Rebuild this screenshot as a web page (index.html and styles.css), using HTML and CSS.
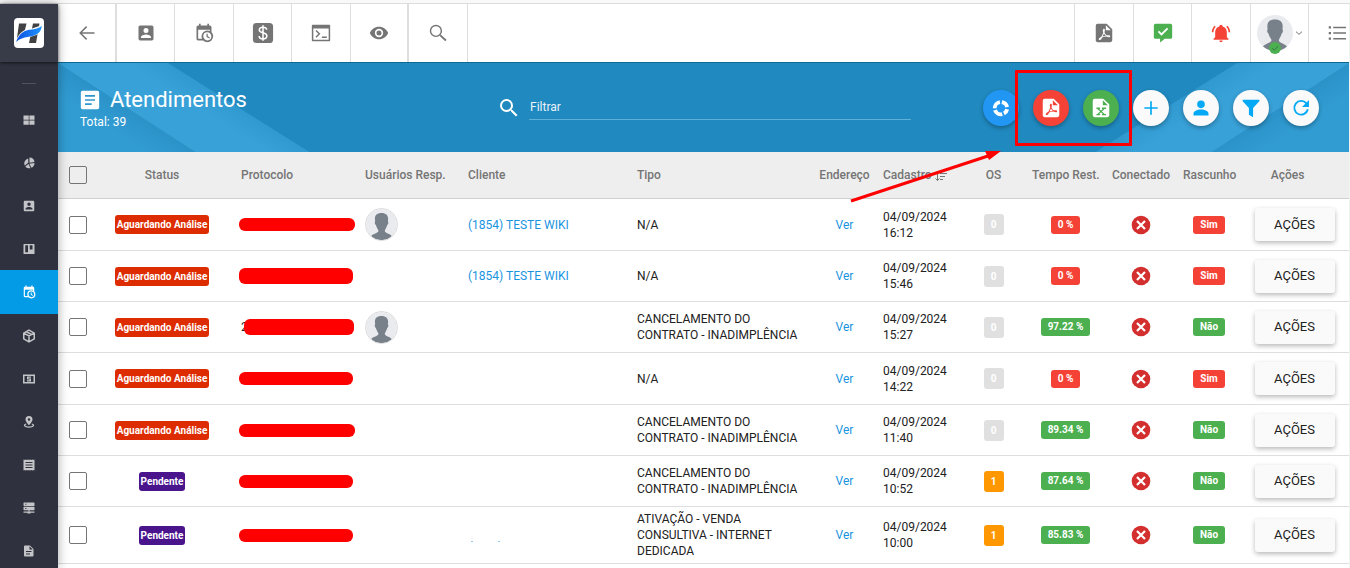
FILE: index.html
```html
<!DOCTYPE html>
<html lang="pt-BR">
<head>
<meta charset="utf-8">
<meta name="viewport" content="width=device-width, initial-scale=1">
<title>Atendimentos</title>
<link rel="stylesheet" href="styles.css">
</head>
<body>
<svg class="sprite" aria-hidden="true">
  <symbol id="i-back" viewBox="0 0 24 24"><path d="M22 12H3M11.500 3.500 3 12l8.500 8.500" fill="none" stroke="currentColor" stroke-width="2"/></symbol>
  <symbol id="i-account" viewBox="0 0 24 24"><path fill="currentColor" d="M6,17C6,15 10,13.900 12,13.900C14,13.900 18,15 18,17V18H6M15,9A3,3 0 0,1 12,12A3,3 0 0,1 9,9A3,3 0 0,1 12,6A3,3 0 0,1 15,9M3,5V19A2,2 0 0,0 5,21H19A2,2 0 0,0 21,19V5A2,2 0 0,0 19,3H5C3.890,3 3,3.900 3,5Z"/></symbol>
  <symbol id="i-calendar" viewBox="0 0 24 24"><path fill="currentColor" d="M15,13H16.500V15.820L18.940,17.230L18.190,18.530L15,16.690V13M19,8H5V19H9.670C9.240,18.090 9,17.070 9,16A7,7 0 0,1 16,9C17.070,9 18.090,9.240 19,9.670V8M5,21C3.890,21 3,20.100 3,19V5C3,3.890 3.890,3 5,3H6V1H8V3H16V1H18V3H19A2,2 0 0,1 21,5V11.100C22.240,12.360 23,14.090 23,16A7,7 0 0,1 16,23C14.090,23 12.360,22.240 11.100,21H5M16,11.150A4.850,4.850 0 0,0 11.150,16C11.150,18.680 13.320,20.850 16,20.850A4.850,4.850 0 0,0 20.850,16C20.850,13.320 18.680,11.150 16,11.150Z"/></symbol>
  <symbol id="i-dollar" viewBox="0 0 24 24"><rect x="1" y="1" width="22" height="22" rx="4" fill="currentColor"/><path d="M16 8.500C16 6.500 14 5.700 12 5.700S8 6.700 8 8.700c0 4 8.200 2.300 8.200 6.500 0 2.200-2.200 3.100-4.200 3.100S7.800 17.300 7.800 15.200M12 3.500v17" fill="none" stroke="#fff" stroke-width="1.700"/></symbol>
  <symbol id="i-console" viewBox="0 0 24 24"><path fill="currentColor" fill-rule="evenodd" d="M2 2h20a1 1 0 0 1 1 1v18a1 1 0 0 1-1 1H2a1 1 0 0 1-1-1V3a1 1 0 0 1 1-1M2.800 6.500v13.700h18.400V6.500Z"/><path d="m6 9 4 4-4 4M13 17h6" fill="none" stroke="currentColor" stroke-width="1.800"/></symbol>
  <symbol id="i-eye" viewBox="0 0 24 24"><path fill="currentColor" d="M12,9A3,3 0 0,0 9,12A3,3 0 0,0 12,15A3,3 0 0,0 15,12A3,3 0 0,0 12,9M12,17A5,5 0 0,1 7,12A5,5 0 0,1 12,7A5,5 0 0,1 17,12A5,5 0 0,1 12,17M12,4.500C7,4.500 2.730,7.610 1,12C2.730,16.390 7,19.500 12,19.500C17,19.500 21.270,16.390 23,12C21.270,7.610 17,4.500 12,4.500Z"/></symbol>
  <symbol id="i-search" viewBox="0 0 24 24"><path fill="currentColor" d="M9.500,3A6.500,6.500 0 0,1 16,9.500C16,11.110 15.410,12.590 14.440,13.730L14.710,14H15.500L20.500,19L19,20.500L14,15.500V14.710L13.730,14.440C12.590,15.410 11.110,16 9.500,16A6.500,6.500 0 0,1 3,9.500A6.500,6.500 0 0,1 9.500,3M9.500,5C7,5 5,7 5,9.500C5,12 7,14 9.500,14C12,14 14,12 14,9.500C14,7 12,5 9.500,5Z"/></symbol>
  <symbol id="i-search-thin" viewBox="0 0 24 24"><circle cx="9.500" cy="9.500" r="6.500" fill="none" stroke="currentColor" stroke-width="1.700"/><path d="m14.500 14.500 7 6.500" stroke="currentColor" stroke-width="2.200"/></symbol>
  <symbol id="i-pdf" viewBox="0 0 24 24"><path fill="currentColor" d="M14,9H19.500L14,3.500V9M7,2H15L21,8V20A2,2 0 0,1 19,22H5C3.890,22 3,21.100 3,20V4A2,2 0 0,1 5,2M11.930,12.440C12.340,13.340 12.860,14.080 13.460,14.590L13.870,14.910C13,15.070 11.800,15.350 10.530,15.840L10.420,15.880L10.920,14.840C11.370,13.970 11.700,13.180 11.930,12.440M18.410,16.250C18.590,16.070 18.680,15.840 18.690,15.590C18.720,15.390 18.670,15.200 18.570,15.040C18.280,14.570 17.530,14.350 16.290,14.350L15,14.420L14.130,13.840C13.500,13.320 12.930,12.410 12.530,11.280L12.570,11.140C12.900,9.810 13.210,8.200 12.550,7.540C12.390,7.380 12.170,7.300 11.940,7.300H11.700C11.330,7.300 11,7.690 10.910,8.070C10.540,9.400 10.760,10.130 11.130,11.340C10.880,12.230 10.560,13.250 10.050,14.280L9.090,16.080L8.200,16.570C7,17.320 6.430,18.160 6.320,18.690C6.280,18.880 6.300,19.050 6.370,19.230L6.400,19.280L6.880,19.590L7.320,19.700C8.130,19.700 9.050,18.750 10.290,16.630L10.470,16.560C11.500,16.230 12.780,16 14.500,15.810C15.530,16.320 16.740,16.550 17.500,16.550C17.940,16.550 18.240,16.440 18.410,16.250Z"/></symbol>
  <symbol id="i-excel" viewBox="0 0 24 24"><path fill="currentColor" fill-rule="evenodd" d="M5 2H14.500L21 8V20A2 2 0 0 1 19 22H5A2 2 0 0 1 3 20V4A2 2 0 0 1 5 2M14 3.500V9H19.500ZM7 11.500V13H8L11 15.800 8 18.500H7V20H11V18.500H10L12 16.700 14 18.500H13V20H17.500V18.500H16L13 15.800 16 13H17.500V11.500H13V13H14L12 14.800 10 13H11V11.500Z"/></symbol>
  <symbol id="i-msg" viewBox="0 0 24 24"><path fill="currentColor" d="M3 1H21A2 2 0 0 1 23 3V17A2 2 0 0 1 21 19H14L8.500 23.500V19H3A2 2 0 0 1 1 17V3A2 2 0 0 1 3 1Z"/><path d="m6.500 10 3.700 3.700L17.500 6.500" fill="none" stroke="#fff" stroke-width="2.200"/></symbol>
  <symbol id="i-bell" viewBox="0 0 24 24"><path fill="currentColor" d="M21,19V20H3V19L5,17V11C5,7.900 7.030,5.170 10,4.290C10,4.190 10,4.100 10,4A2,2 0 0,1 12,2A2,2 0 0,1 14,4C14,4.100 14,4.190 14,4.290C16.970,5.170 19,7.900 19,11V17L21,19M14,21A2,2 0 0,1 12,23A2,2 0 0,1 10,21M19.750,3.190L18.330,4.610C20.040,6.300 21,8.600 21,11H23C23,8.070 21.840,5.250 19.750,3.190M1,11H3C3,8.600 3.960,6.300 5.670,4.610L4.250,3.190C2.160,5.250 1,8.070 1,11Z"/></symbol>
  <symbol id="i-list" viewBox="0 0 24 24"><path fill="currentColor" d="M1 3h3v3H1zM1 10.500h3v3H1zM1 18h3v3H1zM7 3.500h17v2H7zM7 11h17v2H7zM7 18.500h17v2H7z"/></symbol>
  <symbol id="i-avatar" viewBox="0 0 36 36"><circle cx="18" cy="18" r="18" fill="#e9ebef"/><path fill="#78808a" d="M6 31.500C8 28.500 14 28 14.500 25.500 14.500 24 12 21.500 11.500 18.500 9.800 17.500 10 14.500 10.700 14.200 9.300 8 12 4.500 18 4.500S26.600 8 25.400 14.200C26.200 14.500 26.200 17.500 24.700 18.500 24 21.500 21.800 24 21.800 25.500 22 28 28 28.500 30 31.500A18 18 0 0 1 6 31.500Z"/></symbol>
  <symbol id="i-down" viewBox="0 0 12 12"><path d="m1.500 4 4.500 4 4.500-4" fill="none" stroke="currentColor" stroke-width="1.500"/></symbol>
  <symbol id="i-grid" viewBox="0 0 24 24"><path fill="currentColor" d="M1 3h10.500v8.500H1zM12.800 3H23v8.500H12.800zM1 12.800h10.500v8.500H1zM12.800 12.800H23v8.500H12.800z"/></symbol>
  <symbol id="i-pie" viewBox="0 0 24 24"><path fill="currentColor" d="M10.500 3v8.500L3.500 17A10 10 0 0 1 10.500 3M13 1a10.500 10.500 0 0 1 10 9l-10 1.500zM12.500 13.500 23 12a10.500 10.500 0 0 1-6 9.500zM11 13.800l4 8.500a10.500 10.500 0 0 1-10.500-3.500z"/></symbol>
  <symbol id="i-board" viewBox="0 0 24 24"><path fill="currentColor" fill-rule="evenodd" d="M2 2h20a1 1 0 0 1 1 1v18a1 1 0 0 1-1 1H2a1 1 0 0 1-1-1V3a1 1 0 0 1 1-1M4.500 4.500v14H10v-14ZM13.500 4.500v8.500H19V4.500Z"/></symbol>
  <symbol id="i-cube" viewBox="0 0 24 24"><path d="m12 2 9 5v10l-9 5-9-5V7ZM3 7l9 5 9-5M12 12v10M7 4.500l9.500 5" fill="none" stroke="currentColor" stroke-width="2.600"/></symbol>
  <symbol id="i-cash" viewBox="0 0 24 24"><path fill="currentColor" fill-rule="evenodd" d="M0 3h24v18H0zM3 6v12h18V6Z"/><path fill="currentColor" d="M8 7h8v2.500h-5V11h5v6H8v-2.500h5V13H8z"/></symbol>
  <symbol id="i-pin" viewBox="0 0 24 24"><path fill="currentColor" fill-rule="evenodd" d="M12 0a7 7 0 0 1 7 7c0 4.500-7 11.500-7 11.500S5 11.500 5 7a7 7 0 0 1 7-7m0 4.500a2.500 2.500 0 1 0 0 5 2.500 2.500 0 0 0 0-5"/><path d="M6.500 16C0 18 3 22.300 12 22.300S24 18 17.500 16" fill="none" stroke="currentColor" stroke-width="2.600"/></symbol>
  <symbol id="i-receipt" viewBox="0 0 24 24"><path fill="currentColor" fill-rule="evenodd" d="m1 1 2 1.200L5 1l2.500 1.200L10 1l2 1.200L14 1l2.500 1.200L19 1l2 1.200L23 1v22l-2-1.200L19 23l-2.500-1.200L14 23l-2-1.200L10 23l-2.500-1.200L5 23l-2-1.200L1 23ZM5 6v2h14V6ZM5 11v2h14v-2ZM5 16v2h14v-2Z"/></symbol>
  <symbol id="i-server" viewBox="0 0 24 24"><path fill="currentColor" d="M2 1h20l1 1v5l-1 1H2L1 7V2zM2 9.500h20l1 1v5l-1 1h-9V19h10v2.500h-8V23H9v-1.500H1V19h10v-2.500H2l-1-1v-5z"/><path d="M4 4.500h3M4 13h3" stroke="#2f323e" stroke-width="1.500"/></symbol>
  <symbol id="i-doc" viewBox="0 0 24 24"><path fill="currentColor" fill-rule="evenodd" d="M4 1h10l7 7v13a2 2 0 0 1-2 2H4a2 2 0 0 1-2-2V3a2 2 0 0 1 2-2M13 2.500V9h6.500ZM6 12v2h11v-2ZM6 17v2h8v-2Z"/></symbol>
  <symbol id="i-article" viewBox="0 0 24 24"><path fill="currentColor" fill-rule="evenodd" d="M3 1h18a2 2 0 0 1 2 2v18a2 2 0 0 1-2 2H3a2 2 0 0 1-2-2V3a2 2 0 0 1 2-2M6 6v2h12V6ZM6 11v2h12v-2ZM6 16v2h8v-2Z"/></symbol>
  <symbol id="i-donut" viewBox="0 0 24 24"><path d="M13 5A7.500 7.500 0 0 1 19.300 11M19.400 13.500A7.500 7.500 0 0 1 15.500 18.600M13.500 19.300A7.500 7.500 0 0 1 4.700 14.500M4.400 12.300A7.500 7.500 0 0 1 10.700 5" fill="none" stroke="currentColor" stroke-width="4.600"/></symbol>
  <symbol id="i-plus" viewBox="0 0 24 24"><path d="M12 4v16M4 12h16" stroke="currentColor" stroke-width="2"/></symbol>
  <symbol id="i-user" viewBox="0 0 24 24"><path fill="currentColor" d="M12 3a4.600 4.600 0 1 1 0 9.200A4.600 4.600 0 0 1 12 3M12 13.800c5 0 9 2 9 5V21H3v-2.200c0-3 4-5 9-5"/></symbol>
  <symbol id="i-filter" viewBox="0 0 24 24"><path fill="currentColor" d="M2 2H22V4L14.500 12V23L9.500 20V12L2 4Z"/></symbol>
  <symbol id="i-refresh" viewBox="0 0 24 24"><path d="M18.500 6.500A8.200 8.200 0 1 0 20.200 13.500" fill="none" stroke="currentColor" stroke-width="2.200"/><path fill="currentColor" d="M21.500 2.500v8.300h-8.300z"/></symbol>
  <symbol id="i-close" viewBox="0 0 20 20"><circle cx="10" cy="10" r="9.300" fill="#d32f2f"/><path d="m6 6 8 8M14 6l-8 8" stroke="#fff" stroke-width="2.200"/></symbol>
  <symbol id="i-sort" viewBox="0 0 12 10"><path d="M2.500 0v8.500M.5 6.500l2 2 2-2M5 1.500h7M5 4.500h5M5 7.500h3" fill="none" stroke="currentColor"/></symbol>
</svg>

<div class="strip"></div>
<div class="app">
  <aside class="sidebar">
    <a class="logo" href="#" aria-label="Início">
      <svg viewBox="0 0 30 30"><defs><linearGradient id="wing" x1="0" x2="1"><stop offset="0" stop-color="#0b4fe0"/><stop offset="1" stop-color="#1e96ff"/></linearGradient></defs><rect width="30" height="30" rx="4" fill="#fff"/><path fill="#414143" d="M5 5.500h7.500L9 20H3zM19 5.500h6.500L22 25h-7z"/><path fill="#fff" d="M2 22.500C6 13 11 11 18 10.500l10.500-3.500-3 8c-7 5.500-14 2-23.500 10"/><path fill="url(#wing)" d="M2 24C6 14 11 12 18 11.500c4-.5 7-1.500 10-3.500-1 3-1 5-4 7.500-7 5-14 1.500-22 8.500"/></svg>
    </a>
    <div class="rule"></div>
    <nav class="menu">
      <a href="#" aria-label="Painel"><svg><use href="#i-grid"/></svg></a>
      <a href="#" aria-label="Gráficos"><svg><use href="#i-pie"/></svg></a>
      <a href="#" aria-label="Clientes"><svg class="md"><use href="#i-account"/></svg></a>
      <a href="#" aria-label="Quadros"><svg><use href="#i-board"/></svg></a>
      <a class="active" href="#" aria-label="Atendimentos"><svg class="md"><use href="#i-calendar"/></svg></a>
      <a href="#" aria-label="Estoque"><svg class="md"><use href="#i-cube"/></svg></a>
      <a href="#" aria-label="Financeiro"><svg><use href="#i-cash"/></svg></a>
      <a href="#" aria-label="Mapa"><svg><use href="#i-pin"/></svg></a>
      <a href="#" aria-label="Notas"><svg><use href="#i-receipt"/></svg></a>
      <a href="#" aria-label="Servidores"><svg><use href="#i-server"/></svg></a>
      <a href="#" aria-label="Relatórios"><svg><use href="#i-doc"/></svg></a>
    </nav>
  </aside>

  <main class="main">
    <header class="topbar">
      <div class="tools">
        <button class="group-end" aria-label="Voltar"><svg><use href="#i-back"/></svg></button>
        <button aria-label="Clientes"><svg class="lg"><use href="#i-account"/></svg></button>
        <button aria-label="Agenda"><svg class="lg"><use href="#i-calendar"/></svg></button>
        <button aria-label="Financeiro"><svg class="xl"><use href="#i-dollar"/></svg></button>
        <button aria-label="Console"><svg class="lg"><use href="#i-console"/></svg></button>
        <button class="group-end" aria-label="Visualizar"><svg class="lg"><use href="#i-eye"/></svg></button>
        <button aria-label="Buscar"><svg class="lg"><use href="#i-search-thin"/></svg></button>
      </div>
      <div class="tools right">
        <button aria-label="PDF"><svg class="xl"><use href="#i-pdf"/></svg></button>
        <button class="green" aria-label="Mensagens"><svg class="lg"><use href="#i-msg"/></svg></button>
        <button class="red" aria-label="Alertas"><svg class="lg"><use href="#i-bell"/></svg></button>
        <button class="profile" aria-label="Perfil"><span class="face"><svg class="photo"><use href="#i-avatar"/></svg><svg class="online" viewBox="0 0 12 12"><circle cx="6" cy="6" r="6" fill="#4caf50"/><path d="m3 6 2.200 2.200L9 4" fill="none" stroke="#3a7d52"/></svg></span><svg class="chev"><use href="#i-down"/></svg></button>
        <button class="last" aria-label="Menu"><svg><use href="#i-list"/></svg></button>
      </div>
    </header>

    <section class="hero">
      <svg class="deco left" viewBox="0 0 260 90" aria-hidden="true"><defs><linearGradient id="shade" gradientUnits="userSpaceOnUse" x1="55" y1="67" x2="69" y2="45"><stop offset="0" stop-color="#319cd2"/><stop offset="1" stop-color="#2b92c8"/></linearGradient><linearGradient id="band" gradientUnits="userSpaceOnUse" x1="170" y1="64" x2="182" y2="45"><stop offset="0" stop-color="#38a1d8"/><stop offset="1" stop-color="#3099cf"/></linearGradient></defs><path d="M0 0H110L253 90H0Z" fill="url(#band)"/><path d="M0 0 139 90H0Z" fill="url(#shade)"/></svg>
      <svg class="deco right" viewBox="0 0 260 90" aria-hidden="true"><defs><linearGradient id="band2" gradientUnits="userSpaceOnUse" x1="77" y1="45" x2="89" y2="64"><stop offset="0" stop-color="#3099cf"/><stop offset="1" stop-color="#38a1d8"/></linearGradient><linearGradient id="shade2" gradientUnits="userSpaceOnUse" x1="190" y1="45" x2="204" y2="67"><stop offset="0" stop-color="#2b92c8"/><stop offset="1" stop-color="#319cd2"/></linearGradient></defs><path d="M5 90 148 0H260V90Z" fill="url(#band2)"/><path d="M121 90 260 0V90Z" fill="url(#shade2)"/></svg>
      <div class="heading">
        <h1><svg><use href="#i-article"/></svg>Atendimentos</h1>
        <p>Total: 39</p>
      </div>
      <div class="search">
        <svg><use href="#i-search"/></svg>
        <input type="text" placeholder="Filtrar" aria-label="Filtrar">
      </div>
      <div class="actions">
        <button class="fab blue" aria-label="Gráfico"><svg><use href="#i-donut"/></svg></button>
        <button class="fab danger" aria-label="Exportar PDF"><svg class="file"><use href="#i-pdf"/></svg></button>
        <button class="fab success" aria-label="Exportar Excel"><svg class="file"><use href="#i-excel"/></svg></button>
        <button class="fab" aria-label="Adicionar"><svg><use href="#i-plus"/></svg></button>
        <button class="fab" aria-label="Usuário"><svg><use href="#i-user"/></svg></button>
        <button class="fab" aria-label="Filtros"><svg><use href="#i-filter"/></svg></button>
        <button class="fab" aria-label="Atualizar"><svg><use href="#i-refresh"/></svg></button>
      </div>
    </section>

    <table class="grid">
      <colgroup><col class="c-check"><col class="c-status"><col class="c-proto"><col class="c-user"><col class="c-client"><col class="c-type"><col class="c-addr"><col class="c-date"><col class="c-os"><col class="c-time"><col class="c-conn"><col class="c-draft"><col class="c-act"></colgroup>
      <thead>
        <tr><th><input type="checkbox" aria-label="Selecionar todos"></th><th class="mid">Status</th><th>Protocolo</th><th>Usuários Resp.</th><th>Cliente</th><th>Tipo</th><th class="mid">Endereço</th><th>Cadastro <svg class="sort"><use href="#i-sort"/></svg></th><th class="mid">OS</th><th class="mid">Tempo Rest.</th><th class="mid">Conectado</th><th class="mid">Rascunho</th><th class="act">Ações</th></tr>
      </thead>
      <tbody>
        <tr><td><input type="checkbox" aria-label="Selecionar"></td><td class="mid"><span class="tag wait">Aguardando Análise</span></td><td><div class="proto"><span class="mask wide"></span></div></td><td><svg class="person"><use href="#i-avatar"/></svg></td><td><a href="#">(1854) TESTE WIKI</a></td><td>N/A</td><td class="mid"><a href="#">Ver</a></td><td>04/09/2024<br>16:12</td><td class="mid"><span class="os">0</span></td><td class="mid"><span class="pill no">0 %</span></td><td class="mid"><svg class="off"><use href="#i-close"/></svg></td><td class="mid"><span class="pill no">Sim</span></td><td class="mid"><button class="btn">AÇÕES</button></td></tr>
        <tr><td><input type="checkbox" aria-label="Selecionar"></td><td class="mid"><span class="tag wait">Aguardando Análise</span></td><td><div class="proto"><span class="mask tall"></span></div></td><td></td><td><a href="#">(1854) TESTE WIKI</a></td><td>N/A</td><td class="mid"><a href="#">Ver</a></td><td>04/09/2024<br>15:46</td><td class="mid"><span class="os">0</span></td><td class="mid"><span class="pill no">0 %</span></td><td class="mid"><svg class="off"><use href="#i-close"/></svg></td><td class="mid"><span class="pill no">Sim</span></td><td class="mid"><button class="btn">AÇÕES</button></td></tr>
        <tr><td><input type="checkbox" aria-label="Selecionar"></td><td class="mid"><span class="tag wait">Aguardando Análise</span></td><td><div class="proto cut"><span>2</span><span class="mask tall"></span></div></td><td><svg class="person"><use href="#i-avatar"/></svg></td><td></td><td>CANCELAMENTO DO CONTRATO - INADIMPLÊNCIA</td><td class="mid"><a href="#">Ver</a></td><td>04/09/2024<br>15:27</td><td class="mid"><span class="os">0</span></td><td class="mid"><span class="pill ok">97.22 %</span></td><td class="mid"><svg class="off"><use href="#i-close"/></svg></td><td class="mid"><span class="pill ok">Não</span></td><td class="mid"><button class="btn">AÇÕES</button></td></tr>
        <tr><td><input type="checkbox" aria-label="Selecionar"></td><td class="mid"><span class="tag wait">Aguardando Análise</span></td><td><div class="proto"><span class="mask"></span></div></td><td></td><td></td><td>N/A</td><td class="mid"><a href="#">Ver</a></td><td>04/09/2024<br>14:22</td><td class="mid"><span class="os">0</span></td><td class="mid"><span class="pill no">0 %</span></td><td class="mid"><svg class="off"><use href="#i-close"/></svg></td><td class="mid"><span class="pill no">Sim</span></td><td class="mid"><button class="btn">AÇÕES</button></td></tr>
        <tr><td><input type="checkbox" aria-label="Selecionar"></td><td class="mid"><span class="tag wait">Aguardando Análise</span></td><td><div class="proto"><span class="mask wide"></span></div></td><td></td><td></td><td>CANCELAMENTO DO CONTRATO - INADIMPLÊNCIA</td><td class="mid"><a href="#">Ver</a></td><td>04/09/2024<br>11:40</td><td class="mid"><span class="os">0</span></td><td class="mid"><span class="pill ok">89.34 %</span></td><td class="mid"><svg class="off"><use href="#i-close"/></svg></td><td class="mid"><span class="pill ok">Não</span></td><td class="mid"><button class="btn">AÇÕES</button></td></tr>
        <tr><td><input type="checkbox" aria-label="Selecionar"></td><td class="mid"><span class="tag pend">Pendente</span></td><td><div class="proto"><span class="mask"></span></div></td><td></td><td></td><td>CANCELAMENTO DO CONTRATO - INADIMPLÊNCIA</td><td class="mid"><a href="#">Ver</a></td><td>04/09/2024<br>10:52</td><td class="mid"><span class="os has">1</span></td><td class="mid"><span class="pill ok">87.64 %</span></td><td class="mid"><svg class="off"><use href="#i-close"/></svg></td><td class="mid"><span class="pill ok">Não</span></td><td class="mid"><button class="btn">AÇÕES</button></td></tr>
        <tr><td><input type="checkbox" aria-label="Selecionar"></td><td class="mid"><span class="tag pend">Pendente</span></td><td><div class="proto"><span class="mask"></span></div></td><td></td><td><span class="specks"><i></i><i></i></span></td><td>ATIVAÇÃO - VENDA CONSULTIVA - INTERNET DEDICADA</td><td class="mid"><a href="#">Ver</a></td><td>04/09/2024<br>10:00</td><td class="mid"><span class="os has">1</span></td><td class="mid"><span class="pill ok">85.83 %</span></td><td class="mid"><svg class="off"><use href="#i-close"/></svg></td><td class="mid"><span class="pill ok">Não</span></td><td class="mid"><button class="btn">AÇÕES</button></td></tr>
      </tbody>
    </table>
  </main>

  <div class="callout"></div>
  <svg class="arrow" viewBox="0 0 154 54" aria-hidden="true"><path d="M3 50 140 5" stroke="#f00" stroke-width="3"/><path d="M153 0 137 0 141 9Z" fill="#f00"/></svg>
</div>
</body>
</html>
```
FILE: styles.css
```css
* { box-sizing: border-box; }
html, body { height: 100%; }
body { margin: 0; overflow: hidden; display: flex; flex-direction: column; background: #fff; color: #212121; font: 12px/16px Roboto, "Liberation Sans", sans-serif; }
svg { display: block; flex: none; }
button { font: inherit; border: 0; padding: 0; background: none; }
a { color: #1a94df; text-decoration: none; }
.sprite { position: absolute; width: 0; height: 0; }

.strip { flex: none; height: 4px; background: #f9f9f9; border-bottom: 1px solid #dcdcdc; }
.app { position: relative; flex: 1; display: flex; min-height: 0; }

/* sidebar */
.sidebar { position: relative; z-index: 2; flex: none; width: 58px; background: #2f323e; box-shadow: 0 0 10px rgba(0, 0, 0, .35); }
.logo { display: flex; align-items: center; justify-content: center; height: 58px; background: #383b48; box-shadow: 0 1px 3px rgba(0, 0, 0, .6); }
.logo svg { width: 30px; height: 30px; }
.rule { width: 14px; height: 1px; margin: 21px auto 14px; background: #50535d; }
.menu a { display: flex; align-items: center; justify-content: center; height: 43px; color: #c3c4c8; }
.menu a.active { height: 44px; background: #039be5; color: #fff; }
.menu svg { width: 12px; height: 12px; }
.menu .md { width: 14px; height: 14px; }

/* top bar */
.main { flex: 1; min-width: 0; border-right: 1px solid #f2f2f2; }
.topbar { display: flex; justify-content: space-between; height: 58px; color: #757575; background: #fff; }
.tools { display: flex; }
.tools button { display: flex; align-items: center; justify-content: center; width: 58px; color: inherit; border-right: 1px solid #dedede; }
.tools button:nth-child(odd) { width: 59px; }
.tools .group-end { border-right: 2px solid #dedede; }
.tools svg { width: 18px; height: 18px; }
.tools .lg { width: 20px; height: 20px; }
.tools .xl { width: 22px; height: 22px; }
.right button { border-right: 0; border-left: 1px solid #dedede; }
.right .green { color: #4caf50; }
.right .red { color: #f44336; }
.right .profile { gap: 2px; }
.tools.right .last { width: 41px; padding-left: 16px; }
.face { position: relative; }
.tools .photo { width: 36px; height: 36px; }
.tools .online { position: absolute; left: 12px; bottom: -3px; width: 12px; height: 12px; }
.tools .chev { width: 8px; height: 8px; }

/* title band */
.hero { position: relative; overflow: hidden; display: grid; grid-template-columns: 439fr 414fr 438fr; align-items: center; height: 90px; background: #2089bf; color: #fff; border-top: 1px solid #0f6a93; }
.hero > * { position: relative; }
.hero .deco { position: absolute; top: 0; width: 260px; height: 90px; }
.hero .deco.left { left: 0; }
.hero .deco.right { right: 0; }
.heading { padding-left: 22px; }
.heading h1 { display: flex; align-items: center; gap: 10px; margin: 0; font-size: 22px; line-height: 28px; font-weight: 400; }
.heading h1 svg { width: 20px; height: 20px; }
.heading p { margin: 0; }
.search { display: flex; align-items: center; gap: 8px; }
.search svg { width: 24px; height: 24px; }
.search input { flex: 1; min-width: 0; height: 24px; padding: 0 1px; border: 0; border-bottom: 1px solid #5fb0d8; background: none; color: #fff; font: inherit; }
.search input::placeholder { color: #fff; opacity: .9; }
.actions { display: flex; justify-content: flex-end; gap: 14px; padding-right: 30px; }
.fab { display: flex; align-items: center; justify-content: center; width: 36px; height: 36px; border-radius: 50%; background: #fafafa; color: #03a9f4; box-shadow: 0 2px 4px rgba(0, 0, 0, .3); }
.fab svg { width: 20px; height: 20px; }
.fab .file { width: 22px; height: 22px; }
.fab.blue { background: #2196f3; color: #fff; }
.fab.danger { background: #f44336; color: #fff; }
.fab.success { background: #4caf50; color: #fff; }

/* table */
.grid { width: 100%; table-layout: fixed; border-collapse: separate; border-spacing: 0; }
.c-check { width: 30px; }
.c-status { width: 148px; }
.c-proto { width: 124px; }
.c-user { width: 103px; }
.c-client { width: 169px; }
.c-type { width: 179px; }
.c-addr { width: 67px; }
.c-date { width: 82px; }
.c-os { width: 67px; }
.c-time { width: 77px; }
.c-conn { width: 74px; }
.c-draft { width: 62px; }
.c-act { width: 109px; }
th { height: 47px; padding: 0 5px; background: #eee; border-bottom: 1px solid #d0d0d0; color: #757575; font-weight: 500; text-align: left; white-space: nowrap; }
td { height: 51px; padding: 4px 5px; border-bottom: 1px solid #dedede; }
tbody tr:nth-child(3n+1) td { height: 52px; }
.grid .mid { text-align: center; }
.grid .act { padding-right: 19px; text-align: center; }
.grid th:first-child, .grid td:first-child { padding: 0 0 0 11px; }
.grid input { display: block; appearance: none; width: 18px; height: 18px; margin: 0; border: 1px solid #757575; border-radius: 2px; }
.sort { display: inline-block; width: 12px; height: 10px; vertical-align: -3px; }
.tag, .pill, .os { display: inline-block; color: #fff; font-size: 10px; font-weight: 700; border-radius: 3px; vertical-align: middle; white-space: nowrap; }
.tag { padding: 0 2px; line-height: 19px; }
.tag.wait { background: #dd2c00; }
.tag.pend { background: #4a148c; }
.pill { padding: 0 7px; line-height: 18px; }
.pill.no { background: #f44336; }
.pill.ok { background: #4caf50; }
.os { width: 20px; line-height: 21px; background: #e0e0e0; }
.os.has { background: #ff9800; }
.proto { display: flex; align-items: center; margin-left: -2px; }
.proto.cut { padding-left: 2px; }
.mask { width: 114px; height: 13px; border-radius: 6px; background: #f00; }
.mask.wide { width: 117px; }
.mask.tall { height: 16px; }
.proto.cut .mask { width: 110px; margin-left: -4px; z-index: 1; }
.person { width: 33px; height: 33px; border: 1px solid #d8d8d8; border-radius: 50%; }
.off { width: 20px; height: 20px; margin: 0 auto; }
.btn { width: 80px; height: 33px; border-radius: 3px; background: #fafafa; color: #212121; font-size: 13px; vertical-align: middle; box-shadow: 0 2px 5px rgba(0, 0, 0, .28); }
.specks { display: flex; gap: 25px; padding: 12px 0 0 3px; }
.specks i { width: 2px; height: 1px; background: #8fc8ee; }

/* highlight drawn over the export buttons */
.callout { position: absolute; z-index: 3; top: 66px; right: 218px; width: 117px; height: 76px; border: 3px solid #f00; border-radius: 1px; }
.arrow { position: absolute; z-index: 3; top: 147px; right: 348px; width: 154px; height: 54px; }
```
